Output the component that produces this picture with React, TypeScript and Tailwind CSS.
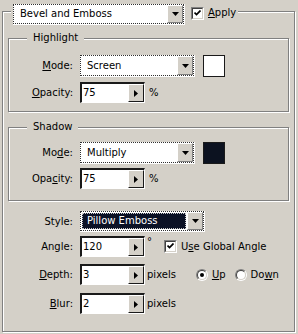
import React from "react";

const DownTri = () => (
  <svg width="7" height="4" viewBox="0 0 7 4"><path d="M0 0H7L3.5 4Z" fill="#000" /></svg>
);
const RightTri = () => (
  <svg width="4" height="7" viewBox="0 0 4 7"><path d="M0 0V7L4 3.5Z" fill="#000" /></svg>
);

function Select({ w, h, text, highlighted }: { w: string; h: string; text: string; highlighted?: boolean }) {
  return (
    <div className={`${w} ${h} border-r border-b border-white`}>
      <div className="flex h-full w-full border border-dotted border-[#303030] bg-white">
        {highlighted ? (
          <div className="m-[1px] flex flex-1 items-center border border-dotted border-[#c8c8c8] bg-[#0c1226] pl-[4px] text-white">
            {text}
          </div>
        ) : (
          <div className="flex flex-1 items-center pl-[6px]">{text}</div>
        )}
        <div className="flex w-[16px] items-center justify-center border border-t-white border-l-white border-r-[#808080] border-b-[#808080] bg-[#d4d0c8]">
          <DownTri />
        </div>
      </div>
    </div>
  );
}

function Spin({ value }: { value: string }) {
  return (
    <div className="flex h-[21px] w-[65px] border-t-2 border-l-2 border-t-[#1a1a1a] border-l-[#1a1a1a] border-r border-b border-r-white border-b-white bg-white">
      <div className="flex flex-1 items-center pl-[1px]">{value}</div>
      <div className="flex w-[16px] items-center justify-center border border-t-white border-l-white border-r-[#1a1a1a] border-b-[#1a1a1a] bg-[#d4d0c8]">
        <RightTri />
      </div>
    </div>
  );
}

function Check() {
  return (
    <div className="h-[13px] w-[13px] border border-t-[#808080] border-l-[#808080] border-r-white border-b-white">
      <div className="flex h-full w-full items-center justify-center border border-t-[#404040] border-l-[#404040] border-r-[#d4d0c8] border-b-[#d4d0c8] bg-white">
        <svg width="7" height="7" viewBox="0 0 7 7">
          <path d="M0.5 2.5L2.5 4.5L6.5 0.5" stroke="#000" strokeWidth="1.7" fill="none" />
        </svg>
      </div>
    </div>
  );
}

function Radio({ on }: { on?: boolean }) {
  return (
    <div className="h-[12px] w-[12px] rounded-full border border-t-[#808080] border-l-[#808080] border-r-white border-b-white">
      <div className="flex h-full w-full items-center justify-center rounded-full border border-t-[#404040] border-l-[#404040] border-r-[#d4d0c8] border-b-[#d4d0c8] bg-white">
        {on && <div className="h-[4px] w-[4px] rounded-full bg-black" />}
      </div>
    </div>
  );
}

function Group({ title, children, pt }: { title: string; children: React.ReactNode; pt: string }) {
  return (
    <div className={`relative h-[74px] w-[281px] border border-[#808080] shadow-[inset_1px_1px_0_#fff,1px_1px_0_#fff] ${pt}`}>
      <span className="absolute left-[18px] top-[-7px] bg-[#d4d0c8] px-[6px] leading-[12px]">{title}</span>
      {children}
    </div>
  );
}

const Label = ({ children, w }: { children: React.ReactNode; w: string }) => (
  <div className={`${w} mr-[7px] shrink-0 text-right`}>{children}</div>
);

export default function App() {
  return (
    <div className="relative h-[334px] w-[298px] overflow-hidden bg-[#d4d0c8] pl-[2px] pt-[11px] font-['DejaVu_Sans',sans-serif] text-[10px] leading-[12px] text-black">
      <div className="h-[321px] w-[293px] border border-[#808080] pl-[5px] pt-[26px] shadow-[inset_1px_1px_0_#fff,1px_1px_0_#fff]">
        <Group title="Highlight" pt="pt-[16px]">
          <div className="flex h-[22px] items-center">
            <Label w="w-[64px]"><u>M</u>ode:</Label>
            <Select w="w-[115px]" h="h-[22px]" text="Screen" />
            <div className="ml-[8px] h-[22px] w-[22px] border border-[#1a1a1a] bg-white" />
          </div>
          <div className="mt-[5px] flex items-center">
            <Label w="w-[64px]"><u>O</u>pacity:</Label>
            <Spin value="75" />
            <span className="ml-[4px]">%</span>
          </div>
        </Group>
        <div className="mt-[15px]">
          <Group title="Shadow" pt="pt-[14px]">
            <div className="flex h-[22px] items-center">
              <Label w="w-[64px]">Mo<u>d</u>e:</Label>
              <Select w="w-[115px]" h="h-[22px]" text="Multiply" />
              <div className="ml-[8px] h-[22px] w-[22px] border border-[#1a1a1a] bg-[#0c1220]" />
            </div>
            <div className="mt-[4px] flex items-center">
              <Label w="w-[64px]">Opa<u>c</u>ity:</Label>
              <Spin value="75" />
              <span className="ml-[4px]">%</span>
            </div>
          </Group>
        </div>
        <div className="mt-[10px] flex items-center">
          <Label w="w-[65px]">Style:</Label>
          <Select w="w-[125px]" h="h-[21px]" text="Pillow Emboss" highlighted />
        </div>
        <div className="mt-[4px] flex items-center">
          <Label w="w-[65px]">Angle:</Label>
          <Spin value="120" />
          <span className="ml-[2px] self-start">°</span>
          <div className="ml-[12px]"><Check /></div>
          <span className="ml-[4px]">U<u>s</u>e Global Angle</span>
        </div>
        <div className="mt-[7px] flex items-center">
          <Label w="w-[65px]"><u>D</u>epth:</Label>
          <Spin value="3" />
          <span className="ml-[2px]">pixels</span>
          <div className="ml-[20px]"><Radio on /></div>
          <span className="ml-[4px]"><u>U</u>p</span>
          <div className="ml-[9px]"><Radio /></div>
          <span className="ml-[4px]">Do<u>w</u>n</span>
        </div>
        <div className="mt-[8px] flex items-center">
          <Label w="w-[65px]"><u>B</u>lur:</Label>
          <Spin value="2" />
          <span className="ml-[2px]">pixels</span>
        </div>
      </div>
      <div className="absolute left-[11px] top-[4px] flex items-start bg-[#d4d0c8] pl-[2px] pr-[2px]">
        <Select w="w-[172px]" h="h-[21px]" text="Bevel and Emboss" />
        <div className="ml-[6px] mt-[3px]"><Check /></div>
        <span className="ml-[4px] mt-[3px]"><u>A</u>pply</span>
      </div>
    </div>
  );
}
